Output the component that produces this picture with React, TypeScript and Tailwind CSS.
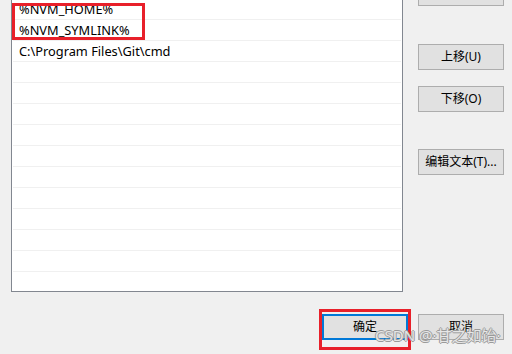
import React from 'react';

const rows = ['%NVM_HOME%', '%NVM_SYMLINK%', 'C:\\Program Files\\Git\\cmd', '', '', '', '', '', '', '', '', '', '', ''];

function Btn({ label, primary = false }: { label: string; primary?: boolean }) {
  return (
    <div
      className={
        'flex h-[26px] w-[86px] items-center justify-center bg-[#e1e1e1] text-[12px] text-black ' +
        (primary ? 'border-2 border-[#0078d7]' : 'border border-[#adadad]')
      }
    >
      {label}
    </div>
  );
}

export default function App() {
  return (
    <div
      className="relative h-[354px] w-[512px] overflow-hidden bg-[#f0f0f0]"
      style={{ fontFamily: '"Noto Sans", "Noto Sans CJK SC", sans-serif' }}
    >
      <div className="flex">
        {/* path list */}
        <div className="ml-[11px] mt-[-3px] h-[295px] w-[392px] border border-[#828790] bg-white p-px">
          {rows.map((r, i) => (
            <div
              key={i}
              className="flex h-[21px] items-center border-b border-[#f0f0f0] pl-[6px] text-[12.8px] leading-none text-black"
            >
              {r}
            </div>
          ))}
        </div>

        {/* side buttons, the first one is scrolled off the top */}
        <div className="ml-[15px] mt-[-20px] flex flex-col">
          <Btn label="" />
          <div className="mt-[38px]">
            <Btn label="上移(U)" />
          </div>
          <div className="mt-[16px]">
            <Btn label="下移(O)" />
          </div>
          <div className="mt-[37px]">
            <Btn label="编辑文本(T)..." />
          </div>
        </div>
      </div>

      <div className="mr-[8px] mt-[22px] flex justify-end gap-[10px]">
        <Btn label="确定" primary />
        <Btn label="取消" />
      </div>

      {/* annotations */}
      <div className="absolute left-[12px] top-[3px] h-[37px] w-[133px] border-[3px] border-[#e8202a]" />
      <div className="absolute left-[319px] top-[309px] h-[41px] w-[92px] border-[3px] border-[#e8202a]" />
      <div className="absolute left-[375px] top-[328px] text-[15px] leading-none text-[#e6e6e6] [text-shadow:1px_0_#9a9a9a,-1px_0_#9a9a9a,0_1px_#9a9a9a,0_-1px_#9a9a9a]">
        CSDN @·甘之如饴·
      </div>
    </div>
  );
}
